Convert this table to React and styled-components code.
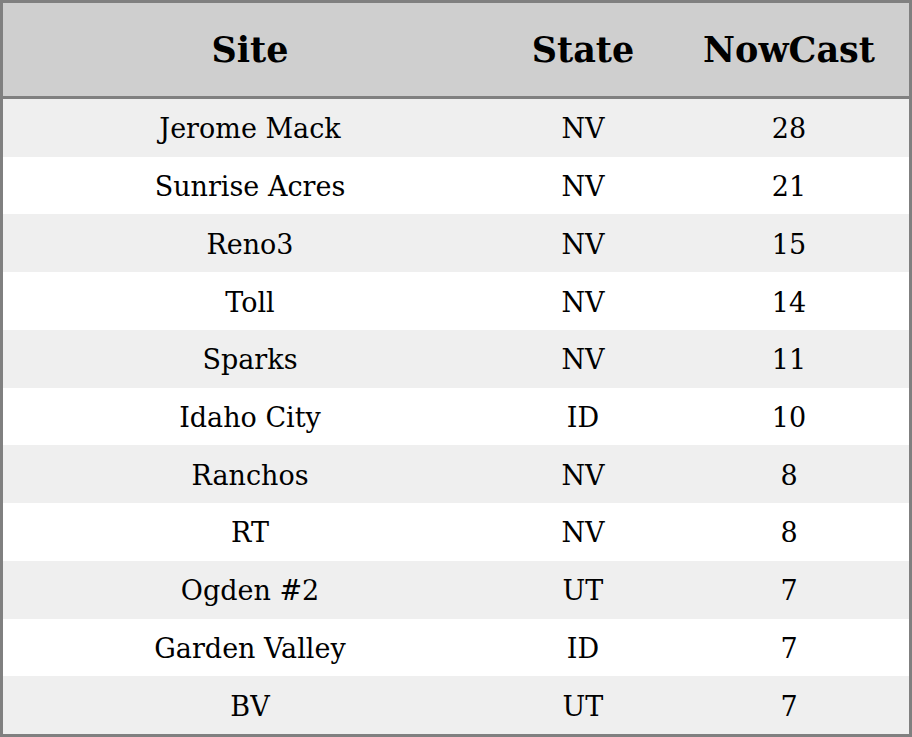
import React from "react";
import styled, { createGlobalStyle } from "styled-components";

const Global = createGlobalStyle`
  html, body { margin: 0; padding: 0; background: #fff; }
  #root { width: 912px; height: 737px; }
`;

const Table = styled.div`
  box-sizing: border-box;
  width: 912px;
  height: 737px;
  border: 3px solid #808080;
  display: grid;
  grid-template-columns: 494px 172px 1fr;
  grid-template-rows: 96px repeat(11, 1fr);
  font-family: "DejaVu Serif", "Liberation Serif", serif;
  color: #000;
`;

const HeadCell = styled.div`
  background: #cfcfcf;
  border-bottom: 3px solid #808080;
  display: flex;
  align-items: center;
  justify-content: center;
  font-weight: bold;
  font-size: 35px;
`;

const Cell = styled.div`
  box-sizing: border-box;
  padding-top: 2px;
  background: ${(p) => (p.$odd ? "#efefef" : "#ffffff")};
  display: flex;
  align-items: center;
  justify-content: center;
  font-size: 27px;
`;

const rows = [
  ["Jerome Mack", "NV", "28"],
  ["Sunrise Acres", "NV", "21"],
  ["Reno3", "NV", "15"],
  ["Toll", "NV", "14"],
  ["Sparks", "NV", "11"],
  ["Idaho City", "ID", "10"],
  ["Ranchos", "NV", "8"],
  ["RT", "NV", "8"],
  ["Ogden #2", "UT", "7"],
  ["Garden Valley", "ID", "7"],
  ["BV", "UT", "7"],
];

export default function App() {
  return (
    <>
      <Global />
      <Table>
        <HeadCell>Site</HeadCell>
        <HeadCell>State</HeadCell>
        <HeadCell>NowCast</HeadCell>
        {rows.map((r, i) =>
          r.map((c, j) => (
            <Cell key={i + "-" + j} $odd={i % 2 === 0}>
              {c}
            </Cell>
          ))
        )}
      </Table>
    </>
  );
}
